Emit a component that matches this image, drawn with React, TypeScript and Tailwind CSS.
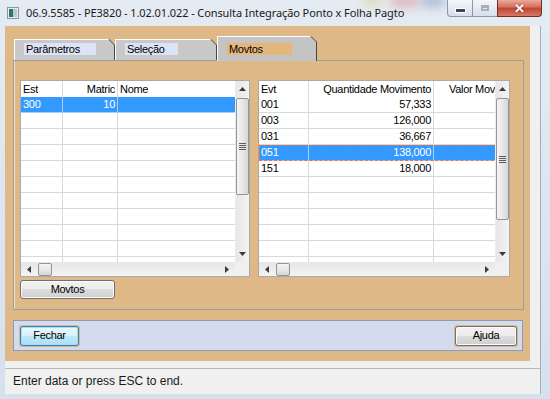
import React from 'react';

type Col = { title: string; cls: string; right?: boolean; pad?: string };

const leftCols: Col[] = [
  { title: 'Est', cls: 'w-[42px]' },
  { title: 'Matric', cls: 'w-[55px]', right: true },
  { title: 'Nome', cls: 'w-[118px]' },
];

const rightCols: Col[] = [
  { title: 'Evt', cls: 'w-[50px]' },
  { title: 'Quantidade Movimento', cls: 'w-[125px]', right: true },
  { title: 'Valor Movimento', cls: 'w-[100px]', pad: 'pl-[15px]' },
];

const leftRows: string[][] = [['300', '10', ''], ...Array.from({ length: 10 }, () => ['', '', ''])];

const rightRows: string[][] = [
  ['001', '57,333', ''],
  ['003', '126,000', ''],
  ['031', '36,667', ''],
  ['051', '138,000', ''],
  ['151', '18,000', ''],
  ...Array.from({ length: 6 }, () => ['', '', '']),
];

function ArrowUp() {
  return (
    <svg width="7" height="4" viewBox="0 0 7 4">
      <path d="M0 4 L3.5 0 L7 4 Z" fill="#3b3b3b" />
    </svg>
  );
}
function ArrowDown() {
  return (
    <svg width="7" height="4" viewBox="0 0 7 4">
      <path d="M0 0 L3.5 4 L7 0 Z" fill="#3b3b3b" />
    </svg>
  );
}
function ArrowLeft() {
  return (
    <svg width="4" height="7" viewBox="0 0 4 7">
      <path d="M4 0 L0 3.5 L4 7 Z" fill="#3b3b3b" />
    </svg>
  );
}
function ArrowRight() {
  return (
    <svg width="4" height="7" viewBox="0 0 4 7">
      <path d="M0 0 L4 3.5 L0 7 Z" fill="#3b3b3b" />
    </svg>
  );
}

function Grip() {
  return (
    <div className="flex flex-col gap-[1px]">
      <div className="w-[7px] h-px bg-[#5c5c5c]" />
      <div className="w-[7px] h-px bg-[#5c5c5c]" />
      <div className="w-[7px] h-px bg-[#5c5c5c]" />
      <div className="w-[7px] h-px bg-[#5c5c5c]" />
    </div>
  );
}

function VScroll({ thumbH }: { thumbH: string }) {
  return (
    <div className="w-[14px] shrink-0 flex flex-col bg-gradient-to-r from-[#e6e6e6] to-[#f4f4f4] border-l border-[#ececec]">
      <div className="h-[16px] flex items-center justify-center">
        <ArrowUp />
      </div>
      <div className="flex-1 flex flex-col items-center">
        <div
          className={`${thumbH} w-[13px] mt-px rounded-[2px] border border-[#959595] bg-gradient-to-r from-[#f4f4f4] via-[#e8e8e8] to-[#d6d6d6] flex items-center justify-center`}
        >
          <Grip />
        </div>
      </div>
      <div className="h-[16px] flex items-center justify-center">
        <ArrowDown />
      </div>
    </div>
  );
}

function HScroll() {
  return (
    <div className="flex-1 flex items-center bg-gradient-to-b from-[#e6e6e6] to-[#f4f4f4]">
      <div className="w-[16px] h-full flex items-center justify-center">
        <ArrowLeft />
      </div>
      <div className="w-[14px] h-[13px] ml-px rounded-[2px] border border-[#959595] bg-gradient-to-b from-[#f4f4f4] via-[#e8e8e8] to-[#d6d6d6]" />
      <div className="flex-1" />
      <div className="w-[16px] h-full flex items-center justify-center">
        <ArrowRight />
      </div>
    </div>
  );
}

function DataGrid({
  cols,
  rows,
  selected,
  focusRow,
  width,
  thumbH,
}: {
  cols: Col[];
  rows: string[][];
  selected: number;
  focusRow?: boolean;
  width: string;
  thumbH: string;
}) {
  return (
    <div className={`${width} h-[197px] border border-[#a9a9a9] bg-white flex flex-col`}>
      <div className="flex flex-1 min-h-0">
        <div className="flex-1 overflow-hidden">
          <div className="flex h-[16px] w-max">
            {cols.map((c) => (
              <div
                key={c.title}
                className={`${c.cls} ${c.pad ?? 'px-[2px]'} shrink-0 border-r border-[#d9d9d9] leading-[16px] whitespace-nowrap overflow-hidden ${c.right ? 'text-right' : ''}`}
              >
                {c.title}
              </div>
            ))}
          </div>
          {rows.map((r, i) => {
            const sel = i === selected;
            return (
              <div key={i} className={`flex h-[16px] w-max relative ${sel ? 'bg-[#3399ff] text-white' : ''}`}>
                {r.map((v, j) => (
                  <div
                    key={j}
                    className={`${cols[j].cls} shrink-0 border-r border-b ${sel ? 'border-[#a9cdf3]' : 'border-[#d9d9d9]'} px-[2px] leading-[15px] whitespace-nowrap overflow-hidden ${cols[j].right ? 'text-right' : ''}`}
                  >
                    {v}
                  </div>
                ))}
                {sel && focusRow && (
                  <div className="absolute inset-0 border border-dashed border-[#f26b43]" />
                )}
              </div>
            );
          })}
        </div>
        <VScroll thumbH={thumbH} />
      </div>
      <div className="flex h-[14px] shrink-0">
        <HScroll />
        <div className="w-[14px] bg-[#f0f0f0]" />
      </div>
    </div>
  );
}

const tabClip =
  '[clip-path:polygon(0_0,calc(100%_-_6px)_0,100%_6px,100%_100%,0_100%)]';

function Tab({ label, w, boxW, active }: { label: string; w: string; boxW: string; active?: boolean }) {
  return (
    <div
      className={`${w} ${active ? 'h-[25px] -mb-px relative z-10' : 'h-[21px]'} bg-[#454545] pr-px ${tabClip}`}
    >
      <div
        className={`h-full ${active ? 'bg-[#c4c4c4] pt-[6px]' : 'bg-[#c8c8c8] pt-[3px]'} border-l border-t border-white pl-[9px] ${tabClip}`}
      >
        <div
          className={`${boxW} h-[12px] ${active ? 'bg-[#e4b67c]' : 'bg-[#dce3f6]'} pl-[2px] text-[11px] leading-[12px] tracking-[-0.3px]`}
        >
          {label}
        </div>
      </div>
    </div>
  );
}

function WinButton({ label, focused, w }: { label: string; focused?: boolean; w: string }) {
  return (
    <div className="p-px bg-[#d9b78b] rounded-[3px]">
      <div
        className={`${w} h-[20px] rounded-[3px] border flex items-center justify-center text-[11px] ${
          focused
            ? 'border-[#3c7fb1] bg-[linear-gradient(#eef9fe,#d5f0fc_50%,#bfe7f9_50%,#aedff6)] shadow-[inset_0_0_0_1px_#9fe0fb]'
            : 'border-[#707070] bg-[linear-gradient(#f2f2f2,#ebebeb_50%,#dddddd_50%,#cfcfcf)] shadow-[inset_0_0_0_1px_#fbfbfb]'
        }`}
      >
        {label}
      </div>
    </div>
  );
}

export default function App() {
  return (
    <div className="w-[550px] h-[399px] overflow-hidden flex flex-col bg-gradient-to-b from-[#e4ebf3] to-[#d6e1ed] text-black font-['Liberation_Sans',Arial,sans-serif] relative">
      {/* blurred desktop behind the glass */}
      <div className="absolute left-[390px] top-[-6px] w-[30px] h-[14px] rounded-full bg-[#d9a0a0] blur-[5px] opacity-60" />
      <div className="absolute left-[420px] top-[-6px] w-[26px] h-[14px] rounded-full bg-[#9fb0d0] blur-[5px] opacity-70" />
      <div className="absolute left-[362px] top-[-6px] w-[22px] h-[12px] rounded-full bg-[#e0d0a0] blur-[5px] opacity-60" />

      {/* title bar */}
      <div className="h-[26px] shrink-0 flex items-start relative">
        <svg className="ml-[7px] mt-[7px]" width="12" height="12" viewBox="0 0 12 12">
          <rect x="0.5" y="0.5" width="11" height="11" fill="#e8eef4" stroke="#8a96a4" />
          <rect x="2" y="2" width="4" height="8" fill="#2f7a5c" />
          <rect x="6" y="2" width="4" height="8" fill="#b9c9da" />
        </svg>
        <div className="ml-[7px] mt-[5px] text-[11px] leading-[15px] tracking-[-0.1px] font-['Noto_Sans',sans-serif] text-[#1b1b1b] whitespace-nowrap">
          06.9.5585 - PE3820 - 1.02.01.022 - Consulta Integração Ponto x Folha Pagto
        </div>
        <div className="ml-auto mr-[8px] flex h-[17px]">
          <div className="w-[26px] border border-t-0 border-[#8d99aa] rounded-bl-[4px] bg-gradient-to-b from-[#f3f6fa] to-[#d6dfea] flex items-center justify-center">
            <div className="w-[9px] h-[3px] bg-[#3a4454] border border-white mt-[5px] box-content" />
          </div>
          <div className="w-[24px] border-b border-[#8d99aa] bg-gradient-to-b from-[#f3f6fa] to-[#d6dfea] flex items-center justify-center">
            <div className="w-[8px] h-[6px] border-2 border-[#a4aebc] border-t-[3px]" />
          </div>
          <div className="w-[45px] border border-t-0 border-[#7a2a20] rounded-br-[4px] bg-[linear-gradient(#eaa99d,#d4705f_45%,#c2432f_50%,#d5796a)] flex items-center justify-center">
            <span className="text-white font-bold text-[13px] leading-none [text-shadow:0_0_2px_#5a1a10]">✕</span>
          </div>
        </div>
      </div>

      {/* client area */}
      <div className="ml-[5px] mr-[9px] h-[368px] shrink-0 bg-[#f0f0f0] border-r border-[#a3aebd] flex flex-col">
        <div className="w-[525px] h-[335px] shrink-0 bg-[#dfb887] pt-[10px] pl-[8px]">
          {/* tabs */}
          <div className="flex items-end h-[24px] ml-px">
            <Tab label="Parâmetros" w="w-[101px]" boxW="w-[72px]" />
            <Tab label="Seleção" w="w-[102px]" boxW="w-[53px]" />
            <Tab label="Movtos" w="w-[100px]" boxW="w-[65px]" active />
          </div>
          {/* tab page */}
          <div className="w-[511px] h-[250px] border border-[#9d9d9d] shadow-[inset_1px_0_0_#f4e2c8] pt-[19px] pl-[6px] text-[11px] tracking-[-0.3px]">
            <div className="flex gap-[8px]">
              <DataGrid cols={leftCols} rows={leftRows} selected={0} width="w-[230px]" thumbH="h-[97px]" />
              <DataGrid
                cols={rightCols}
                rows={rightRows}
                selected={3}
                focusRow
                width="w-[252px]"
                thumbH="h-[122px]"
              />
            </div>
            <div className="mt-[3px] w-[95px] h-[19px] rounded-[3px] border border-[#707070] bg-[linear-gradient(#f2f2f2,#ebebeb_50%,#dddddd_50%,#cfcfcf)] shadow-[inset_0_0_0_1px_#fbfbfb] flex items-center justify-center">
              Movtos
            </div>
          </div>
          {/* buttons panel */}
          <div className="mt-[10px] w-[510px] h-[31px] bg-[#d3dbee] border border-[#8f9ab0] flex items-center justify-between pl-[5px] pr-[4px] tracking-[-0.3px]">
            <WinButton label="Fechar" w="w-[59px]" focused />
            <WinButton label="Ajuda" w="w-[62px]" />
          </div>
        </div>
        {/* status bar */}
        <div className="mt-[7px] h-[25px] border-t border-[#b9b9b9] flex items-center pl-[8px] text-[12px] text-[#1a1a1a]">
          Enter data or press ESC to end.
        </div>
      </div>
    </div>
  );
}
